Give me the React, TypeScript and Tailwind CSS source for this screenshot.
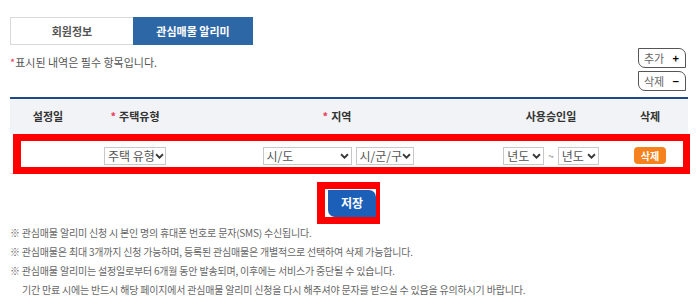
import React from "react";

const Chevron = () => (
  <svg width="9" height="6" viewBox="0 0 10 7" className="shrink-0">
    <path d="M1 1.5 L5 5.5 L9 1.5" fill="none" stroke="#3a3a3a" strokeWidth="2.2" />
  </svg>
);

const FakeSelect = ({ label, width }: { label: string; width: string }) => (
  <div
    className={`${width} flex h-[18px] items-center justify-between border border-[#c8c8c8] bg-white pl-[3px] pr-[2px] text-[12px] leading-none text-[#555]`}
  >
    <span className="whitespace-nowrap">{label}</span>
    <Chevron />
  </div>
);

const notes = [
  "※ 관심매물 알리미 신청 시 본인 명의 휴대폰 번호로 문자(SMS) 수신됩니다.",
  "※ 관심매물은 최대 3개까지 신청 가능하며, 등록된 관심매물은 개별적으로 선택하여 삭제 가능합니다.",
  "※ 관심매물 알리미는 설정일로부터 6개월 동안 발송되며, 이후에는 서비스가 중단될 수 있습니다.",
];

export default function App() {
  return (
    <div className="h-[308px] w-[699px] bg-white pl-[10px] pr-[11px] pt-[17px] font-['Noto_Sans_CJK_KR',sans-serif]">
      {/* Tabs */}
      <div className="flex h-[28px] w-[243px]">
        <div className="flex w-[123px] items-center justify-center border border-r-0 border-[#d9d9d9] text-[11px] font-bold text-[#555]">
          회원정보
        </div>
        <div className="flex w-[120px] items-center justify-center bg-[#2e67a6] text-[11px] font-bold text-white">
          관심매물 알리미
        </div>
      </div>

      {/* required + buttons */}
      <div className="mt-[3px] flex justify-between">
        <p className="mt-[8px] text-[11px] leading-[12px] text-[#555]">
          <span className="text-[#e8405a]">*</span>표시된 내역은 필수 항목입니다.
        </p>
        <div className="mr-[2px] flex flex-col gap-[3px]">
          <button className="flex h-[20px] w-[48px] items-center justify-between rounded-tr-[7px] rounded-bl-[7px] border border-[#555] bg-white pl-[5px] pr-[6px] text-[11px] leading-none text-[#666]">
            <span>추가</span>
            <span className="font-bold text-black">+</span>
          </button>
          <button className="flex h-[20px] w-[48px] items-center justify-between rounded-tr-[7px] rounded-bl-[7px] border border-[#555] bg-white pl-[5px] pr-[6px] text-[11px] leading-none text-[#666]">
            <span>삭제</span>
            <span className="font-bold text-black">−</span>
          </button>
        </div>
      </div>

      {/* Table */}
      <div className="mt-[6px] border-t-2 border-[#1d4a85]">
        <div className="grid h-[35px] grid-cols-[76px_98px_306px_122px_76px] items-center bg-[#f1f3f6] text-[11px] font-bold text-[#333]">
          <div className="text-center">설정일</div>
          <div className="text-center">
            <span className="mr-[3px] text-[#e8405a]">*</span>주택유형
          </div>
          <div className="text-center">
            <span className="mr-[3px] text-[#e8405a]">*</span>지역
          </div>
          <div className="text-center">사용승인일</div>
          <div className="text-center">삭제</div>
        </div>
        <div className="relative grid h-[40px] grid-cols-[76px_98px_306px_122px_76px] items-center border-b border-[#dcdcdc] pt-[4px]">
          <div />
          <div className="flex justify-center">
            <FakeSelect label="주택 유형" width="w-[62px]" />
          </div>
          <div className="flex justify-center gap-[4px] pl-[2px]">
            <FakeSelect label="시/도" width="w-[89px]" />
            <FakeSelect label="시/군/구" width="w-[58px]" />
          </div>
          <div className="flex items-center justify-center gap-[4px]">
            <FakeSelect label="년도" width="w-[41px]" />
            <span className="text-[10px] text-[#888]">~</span>
            <FakeSelect label="년도" width="w-[41px]" />
          </div>
          <div className="flex justify-center">
            <button className="h-[17px] w-[32px] rounded-[4px] bg-[#f5821f] text-[10px] font-bold leading-none text-white">
              삭제
            </button>
          </div>
          <div className="pointer-events-none absolute bottom-[-1px] left-[3px] right-[-2px] top-0 border-[7px] border-l-8 border-[#ff0000]" />
        </div>
      </div>

      {/* Save */}
      <div className="mt-[15px] flex justify-center pl-[6px]">
        <div className="relative">
          <button className="h-[27px] w-[48px] rounded-tr-[7px] rounded-bl-[7px] bg-[#1b5fb8] text-[12px] font-bold text-white">
            저장
          </button>
          <div className="pointer-events-none absolute -bottom-[7px] -left-[11px] -right-[4px] -top-[7px] border-y-[7px] border-l-8 border-r-4 border-[#ff0000]" />
        </div>
      </div>

      {/* Notes */}
      <div className="mt-[6px] text-[10px] leading-[19px] tracking-[-0.02em] text-[#666]">
        {notes.map((n) => (
          <p key={n}>{n}</p>
        ))}
        <p className="pl-[12px]">
          기간 만료 시에는 반드시 해당 페이지에서 관심매물 알리미 신청을 다시 해주셔야 문자를 받으실 수 있음을 유의하시기 바랍니다.
        </p>
      </div>
    </div>
  );
}
